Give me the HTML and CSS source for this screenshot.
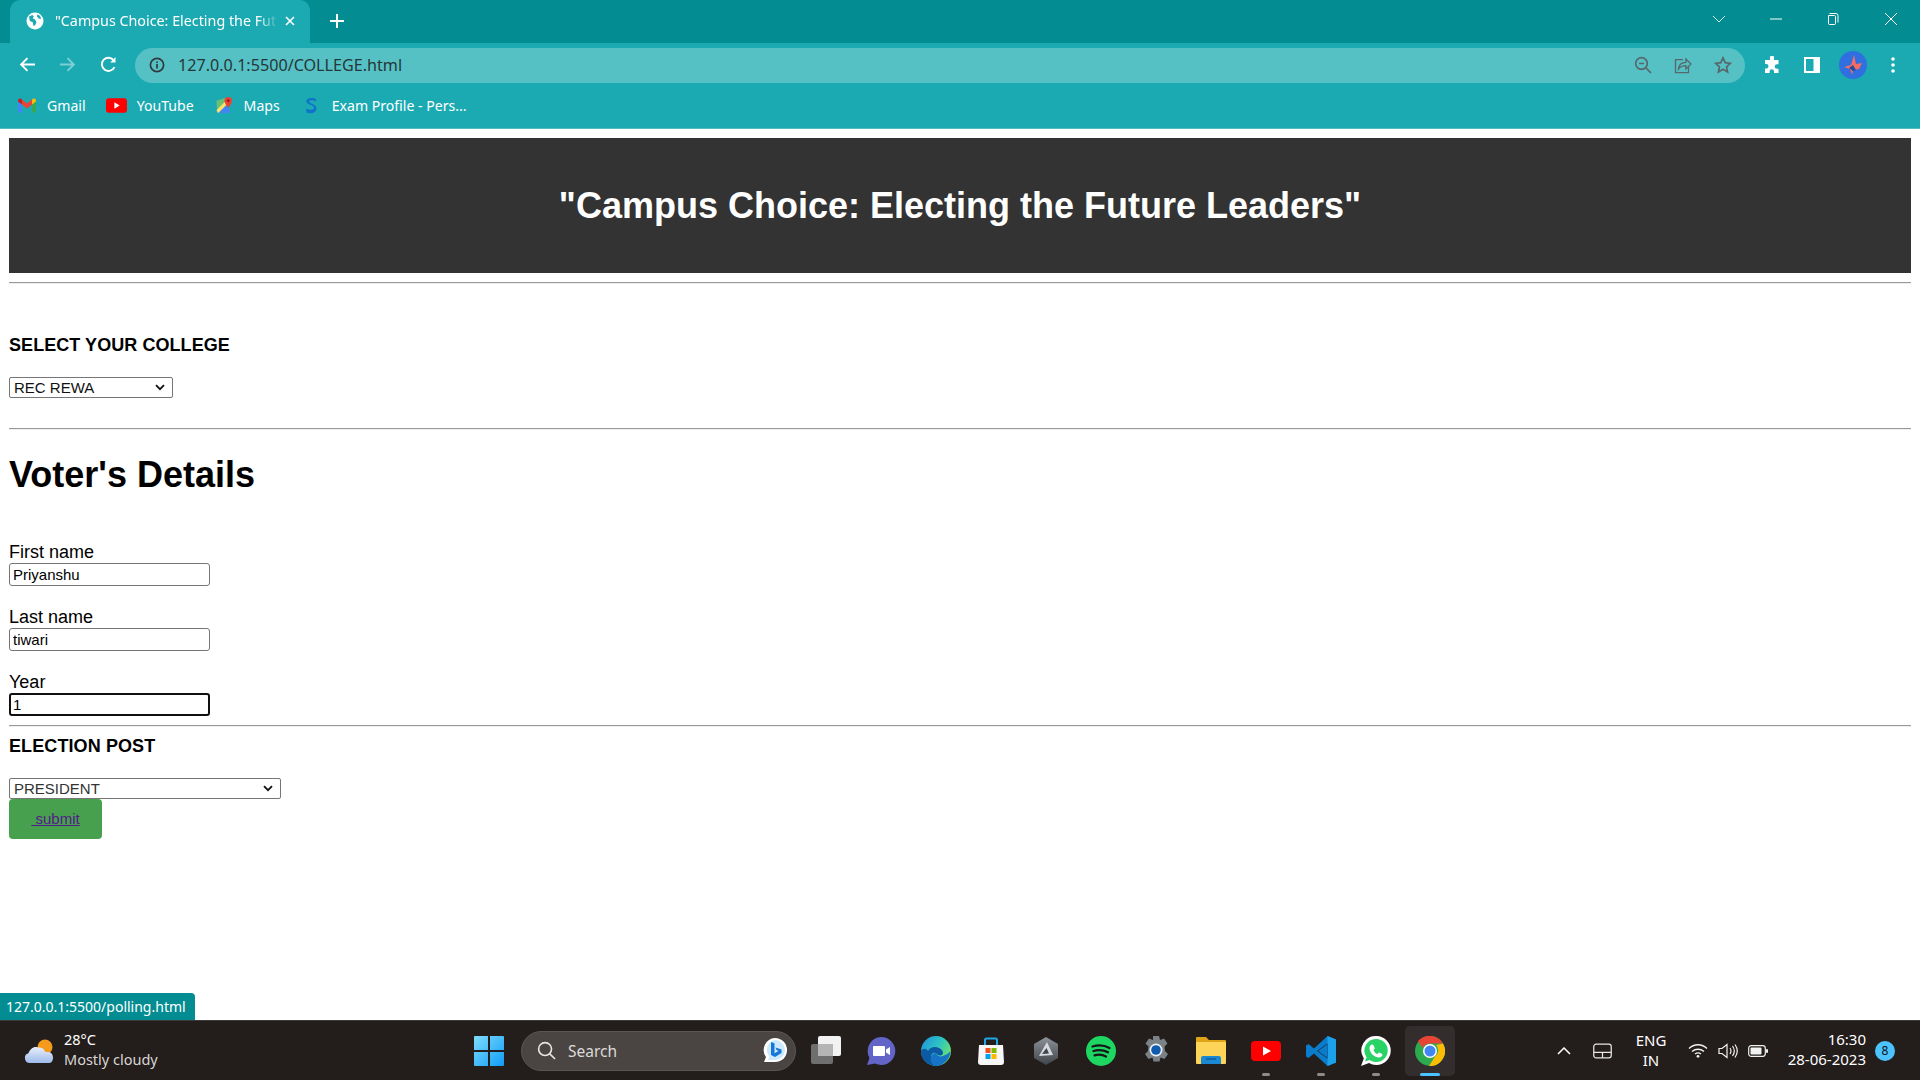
FILE: index.html
```html
<!DOCTYPE html>
<html lang="en">
<head>
<meta charset="utf-8">
<title>Campus Choice</title>
<link rel="stylesheet" href="styles.css">
</head>
<body>
<div class="screen">
  <div class="tabstrip">
    <div class="tab">
      <svg class="globe" viewBox="0 0 18 18"><circle cx="9" cy="9" r="8.5" fill="#fff"/><path d="M3 4.5l3.2-1.6 1.6 1.4-1 2 2.2 1.3 1.5 2.6-1.7 3.6-1.5-.4-.5-3.2-3-1.2z" fill="#1caab2"/><path d="M11.5 2.2l2.7 1.8.8 3-2.4-.4-1.6-2.4z" fill="#1caab2"/></svg>
      <span class="tab-title">"Campus Choice: Electing the Fut</span>
      <svg class="tab-close" viewBox="0 0 12 12"><path d="M2 2l8 8M10 2l-8 8" stroke="#fff" stroke-width="1.6"/></svg>
    </div>
    <svg class="newtab" viewBox="0 0 14 14"><path d="M7 0v14M0 7h14" stroke="#fff" stroke-width="2"/></svg>
    <div class="win-controls">
      <svg class="wc wc-chev" viewBox="0 0 14 10"><path d="M1 2l6 6 6-6" fill="none" stroke="#d5eeee" stroke-width="1"/></svg>
      <svg class="wc wc-min" viewBox="0 0 14 14"><path d="M1 7h12" stroke="#fff" stroke-width="1"/></svg>
      <svg class="wc wc-max" viewBox="0 0 14 14"><path d="M3.5 1.5h6.500a2 2 0 0 1 2 2v7M2.500 3.500h6a1 1 0 0 1 1 1v7a1 1 0 0 1-1 1h-5a1 1 0 0 1-1-1z" fill="none" stroke="#fff" stroke-width="1"/></svg>
      <svg class="wc wc-close" viewBox="0 0 14 14"><path d="M1 1l12 12M13 1L1 13" stroke="#fff" stroke-width="1"/></svg>
    </div>
  </div>

  <div class="toolbar">
    <svg class="nav nav-back" viewBox="0 0 16 16"><path d="M15 8H2M8 2L2 8l6 6" fill="none" stroke="#fff" stroke-width="1.8"/></svg>
    <svg class="nav nav-fwd" viewBox="0 0 16 16"><path d="M1 8h13M8 2l6 6-6 6" fill="none" stroke="#7fced3" stroke-width="1.8"/></svg>
    <svg class="nav nav-reload" viewBox="0 0 16 16"><path d="M13.6 10.4A6.2 6.2 0 1 1 13 4.2" fill="none" stroke="#fff" stroke-width="1.8"/><path d="M14.6 1v5h-5z" fill="#fff"/></svg>
    <div class="omnibox">
      <svg class="info" viewBox="0 0 16 16"><circle cx="8" cy="8" r="6.6" fill="none" stroke="#2f3b3d" stroke-width="1.7"/><path d="M8 7v4.4M8 4.4v1.6" stroke="#2f3b3d" stroke-width="1.7"/></svg>
      <span class="url">127.0.0.1:5500/COLLEGE.html</span>
      <span class="grow"></span>
      <svg class="omni-ic" viewBox="0 0 18 18"><circle cx="7.5" cy="7.5" r="5.8" fill="none" stroke="#56686b" stroke-width="1.7"/><path d="M5 7.5h5M12 12l5 5" stroke="#56686b" stroke-width="1.7"/></svg>
      <svg class="omni-ic" viewBox="0 0 18 18"><path d="M9 3.6H1.5v13h13V11" fill="none" stroke="#56686b" stroke-width="1.3"/><path d="M4.5 13c.4-4.4 3.4-6.6 7.4-6.6V3L17 8l-5.1 5V9.6c-3 0-5.6 1-7.4 3.4z" fill="none" stroke="#56686b" stroke-width="1.3"/></svg>
      <svg class="omni-ic" viewBox="0 0 18 18"><path d="M9 1.8l2.2 4.9 5.2.6-3.9 3.5 1.1 5.2L9 13.300 4.400 16l1.100-5.200L1.600 7.300l5.200-.6z" fill="none" stroke="#56686b" stroke-width="1.7"/></svg>
    </div>
    <svg class="tool tool-ext" viewBox="0 0 18 18"><path d="M7 1.500a2 2 0 0 1 4 0V4h4.500v4.200H14a2.300 2.300 0 0 0 0 4.600h1.500V17H11v-1.500a2.200 2.200 0 0 0-4.400 0V17H2v-4.500h1.200a2.300 2.300 0 0 0 0-4.600H2V4h5z" fill="#fff"/></svg>
    <svg class="tool tool-side" viewBox="0 0 18 18"><path d="M1 1h16v16H1z" fill="#fff"/><path d="M3 3h7.500v12H3z" fill="#1caab2"/></svg>
    <svg class="avatar" viewBox="0 0 28 28"><circle cx="14" cy="14" r="14" fill="#2f6fe0"/><path d="M15 4l2 9 6-1-3 6-6 1-1 5-2-6-6-2 7-2z" fill="#f56d62"/><path d="M14 14l3 5-3 1-4-3z" fill="#274a9a"/></svg>
    <svg class="tool tool-dots" viewBox="0 0 6 18"><circle cx="3" cy="3" r="1.800" fill="#fff"/><circle cx="3" cy="9" r="1.800" fill="#fff"/><circle cx="3" cy="15" r="1.800" fill="#fff"/></svg>
  </div>

  <div class="bookmarks">
    <div class="bm bm-gmail">
      <svg class="bm-ic" viewBox="0 0 18 14"><path d="M0 3v9.500A1.500 1.500 0 0 0 1.500 14H4V6z" fill="#4285f4"/><path d="M14 6v8h2.500a1.500 1.500 0 0 0 1.500-1.500V3z" fill="#34a853"/><path d="M4 6l5 4 5-4V1L9 5 4 1z" fill="#ea4335"/><path d="M0 3l4 3V1L3 .3A2 2 0 0 0 0 2z" fill="#c5221f"/><path d="M14 1v5l4-3V2a2 2 0 0 0-3-1.700z" fill="#fbbc04"/></svg>
      <span>Gmail</span>
    </div>
    <div class="bm bm-yt">
      <svg class="bm-ic" viewBox="0 0 20 14"><rect width="20" height="14" rx="3" fill="#f00"/><path d="M8 4l5 3-5 3z" fill="#fff"/></svg>
      <span>YouTube</span>
    </div>
    <div class="bm bm-maps">
      <svg class="bm-ic" viewBox="0 0 18 18"><path d="M1 4l9-3v16H2z" fill="#6fbf73"/><path d="M2 17L12 8l4 9z" fill="#4285f4"/><path d="M1 14L10 5l3 2L3 17z" fill="#fbe36b"/><path d="M13.500 0a4 4 0 0 0-4 4c0 3 4 7.500 4 7.500s4-4.500 4-7.500a4 4 0 0 0-4-4z" fill="#ea4335"/><circle cx="13.500" cy="4" r="1.500" fill="#a31515"/></svg>
      <span>Maps</span>
    </div>
    <div class="bm bm-exam">
      <svg class="bm-ic" viewBox="0 0 14 20"><path d="M13 3C10 .5 2 .5 1.500 5 1 9 11 9 10.500 13c-.3 2.500-5 2.500-9 .5V18c5 2.500 12 1 12-5C13.500 8 4.500 8 5 5c.3-1.500 5-1.500 8 .5z" fill="#0f73c9"/></svg>
      <span>Exam Profile - Pers...</span>
    </div>
  </div>

  <main class="page">
    <header class="banner"><h1>"Campus Choice: Electing the Future Leaders"</h1></header>
    <hr class="rule">
    <h4 class="sec-title sec-college">SELECT YOUR COLLEGE</h4>
    <select class="sel sel-college"><option>REC REWA</option></select>
    <hr class="rule rule-a">
    <h2 class="voter">Voter's Details</h2>
    <form class="fields">
      <label class="lbl" for="f1">First name</label>
      <input class="inp" id="f1" type="text" value="Priyanshu">
      <label class="lbl lbl-gap" for="f2">Last name</label>
      <input class="inp" id="f2" type="text" value="tiwari">
      <label class="lbl lbl-gap" for="f3">Year</label>
      <input class="inp inp-focus" id="f3" type="text" value="1">
    </form>
    <hr class="rule rule-b">
    <h4 class="sec-title sec-post">ELECTION POST</h4>
    <select class="sel sel-post"><option>PRESIDENT</option></select>
    <div class="submit"><a class="submit-link" href="#">&nbsp;submit</a></div>
  </main>

  <div class="status">127.0.0.1:5500/polling.html</div>

  <footer class="taskbar">
    <div class="weather">
      <svg class="w-ic" viewBox="0 0 32 26"><defs><linearGradient id="cl" x1="0" y1="0" x2="0" y2="1"><stop offset="0" stop-color="#e8eefb"/><stop offset="1" stop-color="#9dbbea"/></linearGradient></defs><circle cx="21" cy="9" r="7.500" fill="#f49a1c"/><path d="M6 25a5 5 0 0 1-1.500-9.800C6 11 10 8 14 9.500c3-.5 6 1 7 4 .800 1.500 4-.5 6 1.500 3 2 3 10-2 10z" fill="url(#cl)"/></svg>
      <div class="w-text"><span class="w-temp">28°C</span><span class="w-desc">Mostly cloudy</span></div>
    </div>
    <div class="task-center">
      <svg class="tb-win" viewBox="0 0 30 30"><defs><linearGradient id="wn" x1="0" y1="0" x2="1" y2="1"><stop offset="0" stop-color="#7fdcff"/><stop offset="1" stop-color="#0f9cf5"/></linearGradient></defs><path d="M0 1a1 1 0 0 1 1-1h13v14H0zM16 0h13a1 1 0 0 1 1 1v13H16zM0 16h14v14H1a1 1 0 0 1-1-1zM16 16h14v13a1 1 0 0 1-1 1H16z" fill="url(#wn)"/></svg>
      <div class="search">
        <svg class="s-ic" viewBox="0 0 20 20"><circle cx="8.500" cy="8.500" r="6.800" fill="none" stroke="#e6e6e6" stroke-width="1.700"/><path d="M13.500 13.500L19 19" stroke="#e6e6e6" stroke-width="1.700"/></svg>
        <span class="s-text">Search</span>
        <span class="grow"></span>
        <svg class="s-bing" viewBox="0 0 24 26"><path d="M12 0a12 12 0 0 1 12 12c0 7-5 12-12 12H1l2-5A12 12 0 0 1 12 0z" fill="#fff"/><path d="M12 2a10 10 0 0 1 0 20H5l1.500-3.500A10 10 0 0 1 12 2z" fill="#3aa6f0" opacity=".25"/><path d="M8 4l3.500 1.200v10l4-2.200-2-1-1-2.500 6 2V15l-6.500 4L8 17z" fill="#1478d8"/></svg>
      </div>
      <div class="apps">
        <div class="app"><svg viewBox="0 0 30 30"><rect x="0" y="8" width="22" height="20" rx="2" fill="#6f6f6f"/><rect x="7" y="0" width="23" height="20" rx="2" fill="#f2f2f2"/><rect x="7" y="8" width="15" height="12" fill="#b5b5b5"/></svg></div>
        <div class="app"><svg viewBox="0 0 30 30"><path d="M15 1a14 14 0 1 1-6 26.500L1 29l2.500-7A14 14 0 0 1 15 1z" fill="#6264c8"/><path d="M8 10h10a1 1 0 0 1 1 1v8a1 1 0 0 1-1 1H8a1 1 0 0 1-1-1v-8a1 1 0 0 1 1-1zM20 13.500l4-2.500v8l-4-2.500z" fill="#fff"/></svg></div>
        <div class="app"><svg viewBox="0 0 30 30"><defs><linearGradient id="ed" x1="0" y1="0" x2="1" y2=".6"><stop offset="0" stop-color="#1e8fdc"/><stop offset=".55" stop-color="#2cc4c4"/><stop offset="1" stop-color="#6fe36a"/></linearGradient></defs><circle cx="15" cy="15" r="15" fill="url(#ed)"/><path d="M7 15c2-4 7-5 11-3 4 2 5 5 3 7-2 1-5 0-6-2-3-1-5 1-5 4 0 4 4 8 9 8.500C8 31 0 25 0 15c2-3 5-3 7 0z" fill="#0c59a4"/><path d="M15 17c1 3 4 4 7 3 3-1 6-3 7.500-5-.5 8-7 15-14.500 15C10 29 9 24 10 21c1-3 3-4 5-4z" fill="#1673c5"/></svg></div>
        <div class="app"><svg viewBox="0 0 30 30"><path d="M3 9h24l1 17a3 3 0 0 1-3 3H5a3 3 0 0 1-3-3z" fill="#f7f7f7"/><path d="M9 9V4a1.500 1.500 0 0 1 1.500-1.500h9A1.500 1.500 0 0 1 21 4v5" fill="none" stroke="#1ea9e6" stroke-width="2"/><rect x="9.500" y="12" width="5" height="5" fill="#f25022"/><rect x="15.500" y="12" width="5" height="5" fill="#7fba00"/><rect x="9.500" y="18" width="5" height="5" fill="#00a4ef"/><rect x="15.500" y="18" width="5" height="5" fill="#ffb900"/></svg></div>
        <div class="app"><svg viewBox="0 0 30 30"><defs><linearGradient id="hx" x1="0" y1="0" x2="0" y2="1"><stop offset="0" stop-color="#8b9298"/><stop offset="1" stop-color="#3f444a"/></linearGradient></defs><path d="M15 1l12 7v14l-12 7-12-7V8z" fill="url(#hx)"/><path d="M16 6l6 13-14 1z" fill="#d6dade"/><path d="M15.500 12l2.500 5.500-7 .5z" fill="#3f444a"/></svg></div>
        <div class="app"><svg viewBox="0 0 30 30"><circle cx="15" cy="15" r="15" fill="#1ed760"/><path d="M6.500 10.500c6-1.800 12-1.200 17 1.500M7.500 15c5-1.400 10-1 14.500 1.300M8.500 19.300c4-1 8-.8 11.500 1.200" fill="none" stroke="#15151a" stroke-width="2.300" stroke-linecap="round"/></svg></div>
        <div class="app"><svg viewBox="0 0 30 30"><path d="M12 0h6l1 4 4-1.500 3.500 5-3 3 .5 4.500 3 3-3.500 5-4-1.500-1 4h-6l-1-4-4 1.500-3.500-5 3-3 .5-4.500-3-3 3.500-5 4 1.500z" fill="#7a8187"/><circle cx="15" cy="14" r="6.500" fill="#eef2f5"/><circle cx="15" cy="14" r="4.800" fill="#0f5bb0"/></svg></div>
        <div class="app"><svg viewBox="0 0 30 30"><path d="M0 2a1 1 0 0 1 1-1h9l3 3h16a1 1 0 0 1 1 1v5H0z" fill="#e0a419"/><path d="M0 6h30v21a1 1 0 0 1-1 1H1a1 1 0 0 1-1-1z" fill="#fdd458"/><path d="M5 22a2 2 0 0 1 2-2h16a2 2 0 0 1 2 2v6H5z" fill="#1b88d4"/><path d="M10 23h10" stroke="#0f5c99" stroke-width="1.500"/></svg></div>
        <div class="app app-dot"><svg viewBox="0 0 30 30"><rect y="5" width="30" height="20" rx="4" fill="#f00"/><path d="M12 10.500l8 4.500-8 4.500z" fill="#fff"/></svg></div>
        <div class="app app-dot"><svg viewBox="0 0 30 30"><path d="M21.500 0L30 3.500v23L21.500 30 8 17.500 2.500 22 0 20.500V9.500L2.500 8 8 12.500z" fill="#0a7ccc"/><path d="M21.500 0L30 3.500v23L21.500 30z" fill="#1ba0ea"/><path d="M21.500 7.500L11 15l10.500 7.500z" fill="#231d1c"/><path d="M21.500 8v14l-9.500-7z" fill="#0a7ccc"/></svg></div>
        <div class="app app-dot"><svg viewBox="0 0 30 30"><path d="M15.500 0A14.500 14.500 0 0 1 15 29a14 14 0 0 1-7-2L0 30l2.800-7.500A14.500 14.500 0 0 1 15.500 0z" fill="#fff"/><path d="M15.500 3A11.500 11.500 0 0 1 15 26a11 11 0 0 1-6.500-2L4 25.500l1.600-4.300A11.500 11.500 0 0 1 15.500 3z" fill="#29d366"/><path d="M11 8.500c-1 0-2.500 1.500-2.500 3.500 0 5 5 9.500 9.500 9.500 2 0 3.500-1.500 3.500-3 0-.5-3-2-3.500-2l-1.500 1.500c-2-.5-3.500-2.500-4-4l1.300-1.500c0-.5-1.300-4-2.300-4z" fill="#fff"/></svg></div>
        <div class="app app-active"><svg viewBox="0 0 30 30"><circle cx="15" cy="15" r="15" fill="#2da94f"/><path d="M15 0a15 15 0 0 1 13 7.500H15A7.500 7.500 0 0 0 8 12L3 5A15 15 0 0 1 15 0z" fill="#ea4335"/><path d="M28 7.500A15 15 0 0 1 14 30l6-9.500A7.500 7.500 0 0 0 21 9z" fill="#fbbc04"/><circle cx="15" cy="15" r="7" fill="#fff"/><circle cx="15" cy="15" r="5.500" fill="#4285f4"/></svg></div>
      </div>
    </div>
    <div class="tray">
      <svg class="tr-chev" viewBox="0 0 14 8"><path d="M1 7l6-6 6 6" fill="none" stroke="#fff" stroke-width="1.500"/></svg>
      <svg class="tr-pad" viewBox="0 0 20 16"><rect x=".8" y=".8" width="18.400" height="14.400" rx="2.500" fill="none" stroke="#e8e8e8" stroke-width="1.300"/><path d="M1 9.500h18M10 9.500v5.500" stroke="#e8e8e8" stroke-width="1.300"/></svg>
      <div class="tr-lang"><span>ENG</span><span>IN</span></div>
      <svg class="tr-wifi" viewBox="0 0 20 15"><path d="M1 5.500c5-5 13-5 18 0M4 8.500c3.500-3 8.500-3 12 0M7 11c2-1.500 4-1.500 6 0" fill="none" stroke="#f2f2f2" stroke-width="1.300"/><circle cx="10" cy="13.300" r="1.400" fill="#f2f2f2"/></svg>
      <svg class="tr-vol" viewBox="0 0 20 16"><path d="M1 5.500h3L9 1.500v13l-5-4H1z" fill="none" stroke="#f2f2f2" stroke-width="1.200"/><path d="M12 5c1.300 2 1.300 4 0 6M14.500 3c2.200 3 2.200 7 0 10M17 1.500c2.800 4 2.800 9 0 13" fill="none" stroke="#f2f2f2" stroke-width="1.200"/></svg>
      <svg class="tr-bat" viewBox="0 0 20 12"><rect x=".7" y=".7" width="16.600" height="10.600" rx="2.500" fill="none" stroke="#f2f2f2" stroke-width="1.200"/><rect x="2.500" y="2.500" width="11" height="7" rx="1" fill="#f2f2f2"/><rect x="18" y="4" width="2" height="4" rx="1" fill="#f2f2f2"/></svg>
      <div class="tr-clock"><span>16:30</span><span>28-06-2023</span></div>
      <div class="tr-badge">8</div>
    </div>
  </footer>
</div>
</body>
</html>
```
FILE: styles.css
```css
* { box-sizing: border-box; }
html, body { margin: 0; padding: 0; height: 100%; overflow: hidden; }
body { font-family: "Liberation Sans", Arial, sans-serif; background: #fff; color: #000; }
.screen { position: relative; display: flex; flex-direction: column; width: 1920px; height: 1080px; }
.grow { flex: 1; }

/* browser chrome */
.tabstrip { display: flex; align-items: flex-end; height: 43px; padding-left: 10px; background: #038c92; flex: none; }
.tab { display: flex; align-items: center; width: 300px; height: 43px; padding: 0 0 2px 16px; background: #1caab2; border-radius: 10px 10px 0 0; }
.globe { width: 18px; height: 18px; margin-right: 11px; flex: none; }
.tab-title { width: 224px; overflow: hidden; white-space: nowrap; font: 14.3px "Noto Sans", sans-serif; color: #fff; -webkit-mask-image: linear-gradient(90deg, #000 90%, transparent); mask-image: linear-gradient(90deg, #000 90%, transparent); }
.tab-close { width: 12px; height: 12px; margin-left: 5px; flex: none; }
.newtab { width: 14px; height: 14px; margin: 0 0 15px 20px; flex: none; }
.win-controls { display: flex; align-items: center; margin-left: auto; height: 38px; align-self: flex-start; }
.wc { width: 14px; height: 14px; flex: none; }
.wc-chev { margin-right: 43px; }
.wc-min { margin-right: 43px; }
.wc-max { margin-right: 44px; }
.wc-close { margin-right: 22px; }

.toolbar { display: flex; align-items: center; height: 43px; padding-left: 19px; background: #1caab2; flex: none; }
.nav { width: 17px; height: 17px; flex: none; }
.nav-back { margin-right: 23px; }
.nav-fwd { margin-right: 24px; }
.nav-reload { margin-right: 18px; }
.omnibox { display: flex; align-items: center; width: 1610px; height: 35px; margin-top: 1px; padding: 0 13px 0 14px; background: #56c1c5; border-radius: 18px; flex: none; }
.info { width: 16px; height: 16px; margin-right: 13px; flex: none; }
.url { font: 16.150px "Noto Sans", sans-serif; color: #263638; white-space: nowrap; }
.omni-ic { width: 18px; height: 18px; margin-left: 22px; flex: none; }
.tool { width: 18px; height: 18px; flex: none; }
.tool-ext { margin-left: 18px; }
.tool-side { margin-left: 22px; }
.avatar { width: 28px; height: 28px; margin-left: 18px; flex: none; }
.tool-dots { width: 6px; margin-left: 23px; }

.bookmarks { display: flex; align-items: center; height: 43px; background: #1caab2; border-bottom: 1px solid #4dbcc3; flex: none; padding-bottom: 3px; }
.bm { display: flex; align-items: center; font: 14.100px "Noto Sans", sans-serif; color: #fff; white-space: nowrap; }
.bm-ic { height: 17px; flex: none; }
.bm-gmail { margin-left: 18px; }
.bm-gmail .bm-ic { width: 18px; margin-right: 11px; }
.bm-yt { margin-left: 20px; }
.bm-yt .bm-ic { width: 21px; margin-right: 10px; }
.bm-maps { margin-left: 21px; }
.bm-maps .bm-ic { width: 18px; margin-right: 11px; }
.bm-exam { margin-left: 24px; }
.bm-exam .bm-ic { width: 14px; margin-right: 14px; }

/* page content */
.page { flex: 1; display: flex; flex-direction: column; align-items: flex-start; padding: 9px 9px 0; min-height: 0; }
.banner { width: 100%; height: 135px; display: flex; align-items: center; justify-content: center; background: #333; flex: none; }
.banner h1 { margin: 0; font-size: 36px; font-weight: 700; line-height: 40px; color: #fff; }
.rule { width: 100%; height: 2px; margin: 9px 0 0; border: 0; border-top: 1px solid #999; border-bottom: 1px solid #eee; flex: none; }
.sec-title { margin: 0; font-size: 18px; line-height: 20px; font-weight: 700; white-space: nowrap; }
.sec-college { margin-top: 51px; letter-spacing: .06px; }
.sel { display: block; height: 21px; padding: 0 0 0 4px; font: 15px "Liberation Sans", Arial, sans-serif; color: #111; background: #fff url("data:image/svg+xml,%3Csvg xmlns='http://www.w3.org/2000/svg' width='10' height='7' viewBox='0 0 10 7'%3E%3Cpath d='M1 1.200l4 4 4-4' fill='none' stroke='%23111' stroke-width='1.800'/%3E%3C/svg%3E") no-repeat right 7px center; border: 1px solid #767676; border-radius: 2px; flex: none; appearance: none; -webkit-appearance: none; }
.sel-college { width: 164px; margin-top: 22px; }
.rule-a { margin-top: 30px; }
.voter { margin: 25px 0 0; font-size: 36px; line-height: 40px; font-weight: 700; }
.fields { display: flex; flex-direction: column; align-items: flex-start; margin-top: 47px; }
.lbl { font-size: 18px; line-height: 20px; height: 20px; }
.lbl-gap { margin-top: 21px; }
.inp { display: block; width: 201px; height: 23px; margin: 1px 0 0; padding: 1px 3px; font: 15px "Liberation Sans", Arial, sans-serif; color: #000; border: 1px solid #767676; border-radius: 3px; background: #fff; }
.inp-focus { border: 2px solid #101010; padding: 0 2px; }
.rule-b { margin-top: 9px; }
.sec-post { margin-top: 9px; letter-spacing: .1px; }
.sel-post { width: 272px; margin-top: 22px; color: #333; }
.submit { display: flex; align-items: center; justify-content: center; width: 93px; height: 40px; margin-top: 0; padding-bottom: 2px; background: #46a04d; border-radius: 4px; flex: none; }
.submit-link { font-size: 15px; color: #551a8b; text-decoration: underline; }

.status { position: absolute; left: 0; top: 993px; width: 195px; height: 27px; padding-left: 6px; font: 14px/27px "Noto Sans", sans-serif; color: #fff; background: #038c92; border-radius: 0 4px 0 0; white-space: nowrap; }

/* taskbar */
.taskbar { display: flex; align-items: center; height: 60px; background: #231d1c; border-top: 1px solid #3d3b3a; flex: none; font-family: "Noto Sans", sans-serif; color: #fff; }
.weather { display: flex; align-items: center; width: 474px; flex: none; padding-left: 24px; }
.w-ic { width: 32px; height: 26px; margin-right: 8px; flex: none; }
.w-text { display: flex; flex-direction: column; font-size: 14.500px; line-height: 20px; margin-top: -3px; }
.w-desc { color: #d8d6d5; }
.task-center { display: flex; align-items: center; }
.tb-win { width: 30px; height: 30px; flex: none; }
.search { display: flex; align-items: center; width: 275px; height: 40px; margin-left: 17px; padding: 0 8px 0 15px; background: #4a4543; border: 1px solid #5a5654; border-radius: 20px; }
.s-ic { width: 19px; height: 19px; margin-right: 12px; flex: none; }
.s-text { font-size: 15.500px; color: #dcdad9; }
.s-bing { width: 24px; height: 26px; flex: none; }
.apps { display: flex; align-items: center; margin-left: 2px; }
.app { position: relative; display: flex; align-items: center; justify-content: center; width: 55px; height: 50px; flex: none; }
.app svg { width: 30px; height: 30px; }
.app-dot::after { content: ""; position: absolute; bottom: 0; left: 24px; width: 8px; height: 3px; border-radius: 2px; background: #8f8d8c; }
.app-active { background: #332e2d; border-radius: 5px; width: 50px; margin-left: 2px; }
.app-active::after { content: ""; position: absolute; bottom: 0; left: 15px; width: 20px; height: 3px; border-radius: 2px; background: #4cc2ff; }
.tray { display: flex; align-items: center; margin-left: auto; }
.tr-chev { width: 14px; height: 8px; flex: none; }
.tr-pad { width: 19px; height: 16px; margin-left: 22px; flex: none; }
.tr-lang { display: flex; flex-direction: column; align-items: center; width: 30px; margin-left: 24px; font-size: 15px; line-height: 20px; margin-top: -2px; }
.tr-wifi { width: 20px; height: 15px; margin-left: 22px; flex: none; }
.tr-vol { width: 20px; height: 16px; margin-left: 10px; flex: none; }
.tr-bat { width: 20px; height: 12px; margin-left: 10px; flex: none; }
.tr-clock { display: flex; flex-direction: column; align-items: flex-end; width: 98px; font-size: 15px; line-height: 20px; margin-left: 0; margin-top: -4px; }
.tr-badge { width: 20px; height: 20px; margin: 0 25px 0 9px; border-radius: 50%; background: #4cc2ff; color: #111; font-size: 12px; line-height: 20px; text-align: center; }
```
